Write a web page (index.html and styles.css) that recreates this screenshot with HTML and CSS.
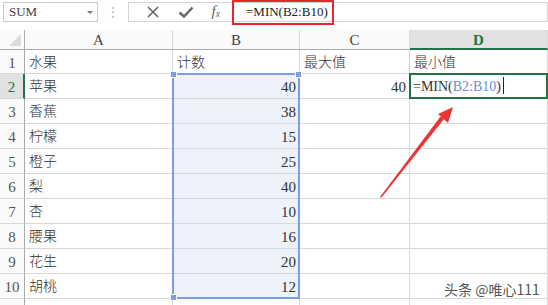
FILE: index.html
```html
<!DOCTYPE html>
<html lang="zh-CN">
<head>
    <meta charset="UTF-8">
    <meta name="viewport" content="width=device-width, initial-scale=1.0">
    <title>MIN</title>
    <link rel="stylesheet" href="styles.css">
</head>
<body>

    <div class="sheet">

        <div class="toolbar">
            <div class="namebox">
                <span>SUM</span>
                <span class="caret"></span>
            </div>
            <div class="dots">⋮</div>
            <div class="buttons">
                <svg class="ico" width="14" height="14" viewBox="0 0 14 14"><path d="M2 2 L12 12 M12 2 L2 12" stroke="#666" stroke-width="1.6" fill="none"/></svg>
                <svg class="ico" width="16" height="14" viewBox="0 0 16 14"><path d="M1.5 7.5 L6 11.5 L14.5 2.5" stroke="#666" stroke-width="2.4" fill="none"/></svg>
                <span class="fx">f<sub>x</sub></span>
            </div>
            <div class="formula">
                <span class="ftext">=MIN(B2:B10)</span>
            </div>
        </div>

        <div class="grid">
            <div class="corner"><span class="tri"></span></div>
            <div class="colh">A</div>
            <div class="colh">B</div>
            <div class="colh">C</div>
            <div class="colh active">D</div>

            <div class="rowh">1</div>
            <div class="cell">水果</div>
            <div class="cell">计数</div>
            <div class="cell">最大值</div>
            <div class="cell">最小值</div>

            <div class="rowh active">2</div>
            <div class="cell">苹果</div>
            <div class="cell num sel">40</div>
            <div class="cell num">40</div>
            <div class="cell edit">=MIN(<span class="ref">B2:B10</span>)<span class="cursor"></span></div>

            <div class="rowh">3</div>
            <div class="cell">香蕉</div>
            <div class="cell num sel">38</div>
            <div class="cell"></div>
            <div class="cell"></div>

            <div class="rowh">4</div>
            <div class="cell">柠檬</div>
            <div class="cell num sel">15</div>
            <div class="cell"></div>
            <div class="cell"></div>

            <div class="rowh">5</div>
            <div class="cell">橙子</div>
            <div class="cell num sel">25</div>
            <div class="cell"></div>
            <div class="cell"></div>

            <div class="rowh">6</div>
            <div class="cell">梨</div>
            <div class="cell num sel">40</div>
            <div class="cell"></div>
            <div class="cell"></div>

            <div class="rowh">7</div>
            <div class="cell">杏</div>
            <div class="cell num sel">10</div>
            <div class="cell"></div>
            <div class="cell"></div>

            <div class="rowh">8</div>
            <div class="cell">腰果</div>
            <div class="cell num sel">16</div>
            <div class="cell"></div>
            <div class="cell"></div>

            <div class="rowh">9</div>
            <div class="cell">花生</div>
            <div class="cell num sel">20</div>
            <div class="cell"></div>
            <div class="cell"></div>

            <div class="rowh">10</div>
            <div class="cell">胡桃</div>
            <div class="cell num sel">12</div>
            <div class="cell"></div>
            <div class="cell"></div>

            <div class="rowh"></div>
            <div class="cell"></div>
            <div class="cell"></div>
            <div class="cell"></div>
            <div class="cell"></div>
        </div>

        <!-- overlays -->
        <div class="redbox"></div>
        <div class="selbox">
            <span class="h h1"></span>
            <span class="h h2"></span>
            <span class="h h3"></span>
        </div>
        <div class="activebox"></div>

        <svg class="arrow" width="548" height="305" viewBox="0 0 548 305">
            <polygon points="380,197 381.5,197.5 444,119 440.5,116.5" fill="#ec3434"/>
            <polygon points="453,107 438,114 448,123" fill="#ec3434"/>
        </svg>

        <div class="mark">头条 @唯心111</div>
    </div>

</body>
</html>
```

FILE: styles.css
```css
body{
    margin: 0px;
    background: white;
    font-family: "Liberation Serif", "Noto Sans CJK SC", serif;
}

.sheet{
    position: relative;
    width: 548px;
    height: 305px;
    overflow: hidden;
}

.toolbar{
    display: flex;
    align-items: flex-start;
    height: 30px;
    padding-top: 2px;
    box-sizing: border-box;
}

.namebox{
    display: flex;
    align-items: center;
    justify-content: space-between;
    width: 95px;
    height: 20px;
    margin-left: 3px;
    padding: 0 4px 0 5px;
    box-sizing: border-box;
    border: 1px solid #c8c8c8;
    font-size: 13px;
    color: #444;
}

.caret{
    width: 0;
    height: 0;
    border-left: 3px solid transparent;
    border-right: 3px solid transparent;
    border-top: 3px solid #777;
}

.dots{
    width: 30px;
    text-align: center;
    color: #aaa;
    font-size: 12px;
    line-height: 20px;
}

.buttons{
    display: flex;
    align-items: center;
    justify-content: space-around;
    width: 105px;
    height: 20px;
    box-sizing: border-box;
    border: 1px solid #d4d4d4;
    border-right: none;
    padding: 0 4px 0 8px;
}

.fx{
    font-style: italic;
    font-size: 15px;
    color: #666;
    line-height: 14px;
}

.fx sub{
    font-size: 10px;
    vertical-align: -1px;
}

.formula{
    flex: 1;
    height: 20px;
    box-sizing: border-box;
    border: 1px solid #d4d4d4;
    padding-left: 12px;
    font-size: 13px;
    line-height: 18px;
    color: #222;
}

.grid{
    display: grid;
    grid-template-columns: 25px 148px 127px 110px 138px;
    grid-template-rows: 20px 24px repeat(9, 25px) 25px;
}

.grid > div{
    box-sizing: border-box;
    border-right: 1px solid #d8d8d8;
    border-bottom: 1px solid #d8d8d8;
}

.corner{
    position: relative;
    background: #fafafa;
    border-right: 1px solid #ababab !important;
    border-bottom: 1px solid #ababab !important;
}

.tri{
    position: absolute;
    right: 3px;
    bottom: 3px;
    width: 0;
    height: 0;
    border-left: 12px solid transparent;
    border-bottom: 12px solid #dcdcdc;
}

.colh{
    background: #fafafa;
    text-align: center;
    font-size: 15px;
    line-height: 20px;
    color: #444;
    border-bottom: 1px solid #ababab !important;
}

.colh.active{
    background: #e1e1e1;
    color: #217346;
    font-weight: bold;
    border-bottom: 2px solid #217346 !important;
}

.rowh{
    background: #fafafa;
    text-align: center;
    font-size: 15px;
    line-height: 26px;
    color: #555;
    border-right: 1px solid #ababab !important;
}

.rowh.active{
    background: #e1e1e1;
    color: #217346;
    border-right: 2px solid #217346 !important;
}

.cell{
    padding-left: 4px;
    font-size: 14px;
    line-height: 26px;
    color: #333;
    font-weight: 300;
    white-space: nowrap;
}

.num{
    text-align: right;
    padding-right: 3px;
    font-size: 15px;
    font-weight: normal;
}

.sel{
    background: #eef2fb;
}

.edit{
    padding-left: 3px;
    font-size: 14px;
    font-weight: normal;
    overflow: visible;
}

.ref{
    color: #6c8fd8;
}

.cursor{
    display: inline-block;
    width: 1px;
    height: 17px;
    margin-left: 2px;
    background: #222;
    vertical-align: -3px;
}

.redbox{
    position: absolute;
    left: 232px;
    top: 0px;
    width: 102px;
    height: 25px;
    box-sizing: border-box;
    border: 2px solid #e8262b;
}

.selbox{
    position: absolute;
    left: 172px;
    top: 73px;
    width: 128px;
    height: 226px;
    box-sizing: border-box;
    border: 2px solid #7d9de0;
}

.h{
    position: absolute;
    width: 5px;
    height: 5px;
    background: #7d9de0;
    border: 1px solid white;
}

.h1{ left: -4px; top: -4px; }
.h2{ right: -4px; top: -4px; }
.h3{ left: -4px; bottom: -4px; }

.activebox{
    position: absolute;
    left: 409px;
    top: 73px;
    width: 139px;
    height: 26px;
    box-sizing: border-box;
    border: 2px solid #217346;
}

.arrow{
    position: absolute;
    left: 0;
    top: 0;
    pointer-events: none;
}

.mark{
    position: absolute;
    left: 444px;
    top: 279px;
    font-family: "Noto Sans CJK SC", sans-serif;
    font-size: 14px;
    color: #555;
    text-shadow: 0 0 2px white;
}
```
